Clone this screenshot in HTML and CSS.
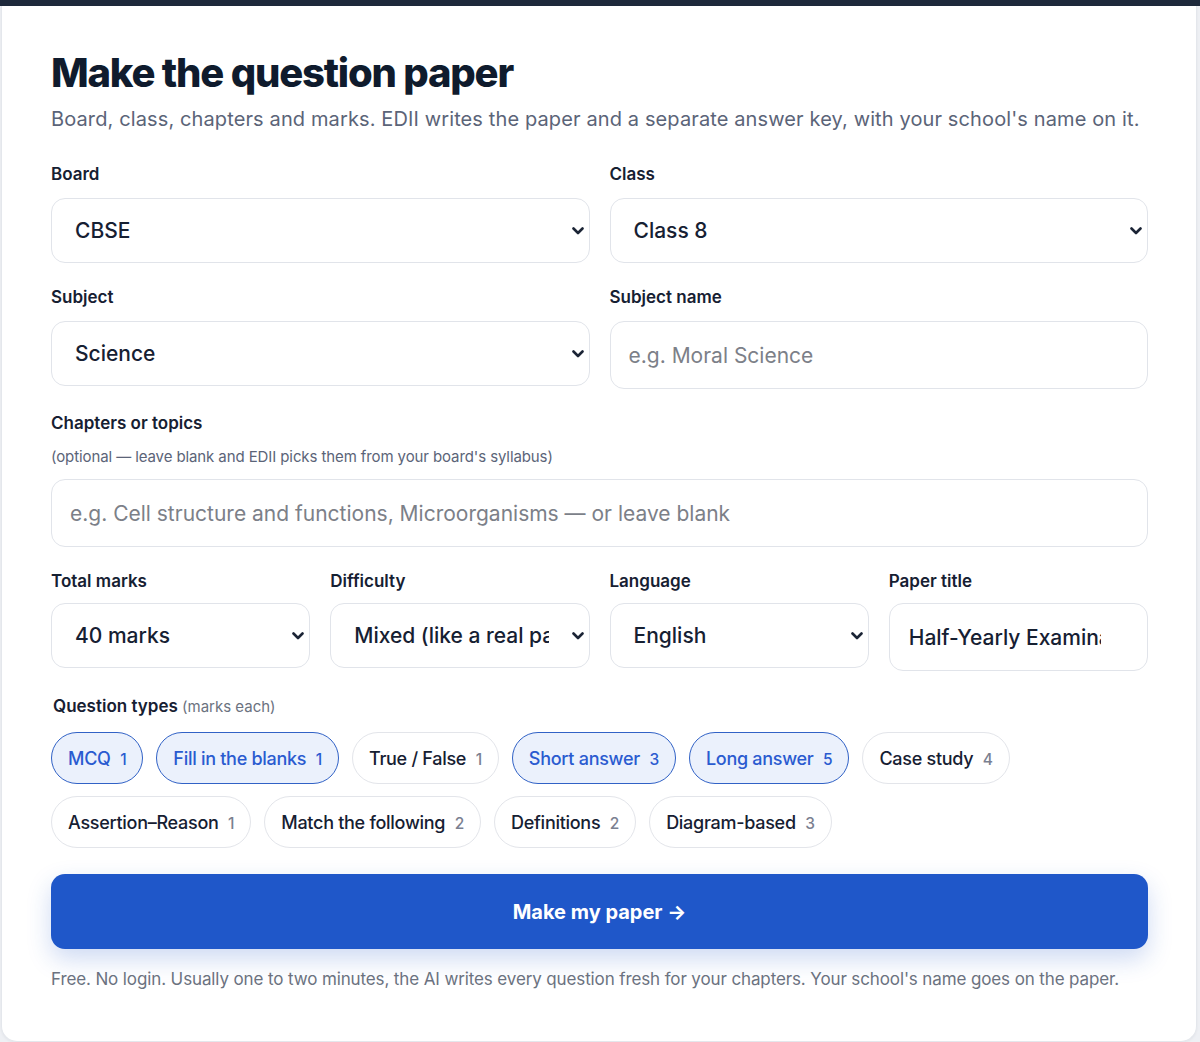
FILE: index.html
```html
<!DOCTYPE html>
<html lang="en">
<head>
    <meta charset="UTF-8">
    <meta name="viewport" content="width=device-width, initial-scale=1.0">
    <title>Make the question paper - EDII</title>
    <link rel="stylesheet" href="styles.css">
</head>
<body>
    <div class="topbar"></div>
    <form class="card" onsubmit="return false">
        <h1>Make the question paper</h1>
        <p class="subtitle">Board, class, chapters and marks. EDII writes the paper and a separate answer key, with your school's name on it.</p>

        <div class="grid two">
            <div class="field">
                <label>Board</label>
                <div class="select-wrap">
                    <select>
                        <option>CBSE</option>
                        <option>ICSE</option>
                        <option>State Board</option>
                    </select>
                    <svg class="chev" viewBox="0 0 12 8"><path d="M1.5 1.5 6 6l4.5-4.5"/></svg>
                </div>
            </div>
            <div class="field">
                <label>Class</label>
                <div class="select-wrap">
                    <select>
                        <option>Class 8</option>
                    </select>
                    <svg class="chev" viewBox="0 0 12 8"><path d="M1.5 1.5 6 6l4.5-4.5"/></svg>
                </div>
            </div>
            <div class="field">
                <label>Subject</label>
                <div class="select-wrap">
                    <select>
                        <option>Science</option>
                    </select>
                    <svg class="chev" viewBox="0 0 12 8"><path d="M1.5 1.5 6 6l4.5-4.5"/></svg>
                </div>
            </div>
            <div class="field">
                <label>Subject name</label>
                <input type="text" placeholder="e.g. Moral Science">
            </div>
            <div class="field wide">
                <label>Chapters or topics</label>
                <span class="hint">(optional — leave blank and EDII picks them from your board's syllabus)</span>
                <input type="text" class="pad-lg" placeholder="e.g. Cell structure and functions, Microorganisms — or leave blank">
            </div>
        </div>

        <div class="grid four">
            <div class="field">
                <label>Total marks</label>
                <div class="select-wrap">
                    <select>
                        <option>40 marks</option>
                    </select>
                    <svg class="chev" viewBox="0 0 12 8"><path d="M1.5 1.5 6 6l4.5-4.5"/></svg>
                </div>
            </div>
            <div class="field">
                <label>Difficulty</label>
                <div class="select-wrap">
                    <select>
                        <option>Mixed (like a real paper)</option>
                    </select>
                    <svg class="chev" viewBox="0 0 12 8"><path d="M1.5 1.5 6 6l4.5-4.5"/></svg>
                </div>
            </div>
            <div class="field">
                <label>Language</label>
                <div class="select-wrap">
                    <select>
                        <option>English</option>
                    </select>
                    <svg class="chev" viewBox="0 0 12 8"><path d="M1.5 1.5 6 6l4.5-4.5"/></svg>
                </div>
            </div>
            <div class="field">
                <label>Paper title</label>
                <input type="text" class="title-input" value="Half-Yearly Examination">
            </div>
        </div>

        <div class="types">
            <div class="types-label">Question types <small>(marks each)</small></div>
            <div class="chips">
                <button type="button" class="chip on">MCQ <span>1</span></button>
                <button type="button" class="chip on">Fill in the blanks <span>1</span></button>
                <button type="button" class="chip">True / False <span>1</span></button>
                <button type="button" class="chip on">Short answer <span>3</span></button>
                <button type="button" class="chip on">Long answer <span>5</span></button>
                <button type="button" class="chip">Case study <span>4</span></button>
                <button type="button" class="chip">Assertion–Reason <span>1</span></button>
                <button type="button" class="chip">Match the following <span>2</span></button>
                <button type="button" class="chip">Definitions <span>2</span></button>
                <button type="button" class="chip">Diagram-based <span>3</span></button>
            </div>
        </div>

        <button type="submit" class="make">Make my paper →</button>
        <p class="note">Free. No login. Usually one to two minutes, the AI writes every question fresh for your chapters. Your school's name goes on the paper.</p>
    </form>

    <script>
        // toggle question types on and off
        document.querySelectorAll('.chip').forEach(function (chip) {
            chip.addEventListener('click', function () {
                chip.classList.toggle('on');
            });
        });
    </script>
</body>
</html>
```

FILE: styles.css
```css
* {
    margin: 0;
    padding: 0;
    box-sizing: border-box;
}

body {
    font-family: Inter, 'Noto Sans', sans-serif;
    background: #eef0f4;
    color: #162032;
}

.topbar {
    height: 6px;
    background: #1e293b;
}

.card {
    width: 1196px;
    margin-left: 1px;
    background: #fff;
    border: 1px solid #e4e7ec;
    border-top: none;
    border-radius: 0 0 16px 16px;
    padding: 43px 48px 50px 49px;
    box-shadow: 0 1px 3px rgba(15, 23, 42, 0.05);
}

h1 {
    font-size: 40px;
    line-height: 48px;
    font-weight: 800;
    letter-spacing: -1.2px;
    color: #0f1b2d;
}

.subtitle {
    margin-top: 8px;
    font-size: 20px;
    line-height: 28px;
    letter-spacing: 0.12px;
    color: #5b6478;
}

.grid {
    display: grid;
    column-gap: 20px;
    row-gap: 22px;
}

.grid.two {
    margin-top: 29px;
    grid-template-columns: 1fr 1fr;
}

.grid.four {
    margin-top: 22px;
    grid-template-columns: repeat(4, 1fr);
    align-items: start;
}

.field {
    display: flex;
    flex-direction: column;
    gap: 12px;
}

.grid.four .field {
    gap: 10px;
}

.field.wide {
    grid-column: 1 / -1;
}

label,
.types-label {
    font-size: 17px;
    line-height: 24px;
    font-weight: 600;
    color: #162032;
}

.hint {
    font-size: 15px;
    line-height: 20px;
    letter-spacing: -0.1px;
    color: #5b6478;
}

.select-wrap {
    position: relative;
}

select {
    appearance: none;
    width: 100%;
    height: 65px;
    padding: 0 40px 0 23px;
    border: 1px solid #e1e4ea;
    border-radius: 14px;
    background: #fff;
    font-family: inherit;
    font-size: 21px;
    font-weight: 500;
    color: #162032;
}

.chev {
    position: absolute;
    right: 6px;
    top: 29px;
    width: 12px;
    height: 8px;
    pointer-events: none;
}

.chev path {
    fill: none;
    stroke: #1b2435;
    stroke-width: 2.6;
    stroke-linecap: round;
    stroke-linejoin: round;
}

input {
    width: 100%;
    height: 68px;
    padding: 0 18px;
    border: 1px solid #e1e4ea;
    border-radius: 14px;
    background: #fff;
    font-family: inherit;
    font-size: 21px;
    font-weight: 500;
    color: #162032;
}

input.pad-lg {
    padding-left: 18px;
}

input.title-input {
    padding: 0 46px 0 19px;
}

input::placeholder {
    color: #7c8088;
    font-weight: 400;
}

.types {
    margin-top: 23px;
}

.types-label {
    padding-left: 2px;
}

.types-label small {
    font-size: 15px;
    font-weight: 400;
    color: #6b7280;
}

.chips {
    margin-top: 13px;
    display: flex;
    flex-wrap: wrap;
    gap: 12px 13px;
}

.chip {
    height: 52px;
    padding: 0 16px;
    border: 1.5px solid #e3e5ea;
    border-radius: 26px;
    background: #fff;
    font-family: inherit;
    font-size: 18px;
    font-weight: 500;
    letter-spacing: -0.28px;
    color: #162032;
    cursor: pointer;
}

.chip span {
    margin-left: 5px;
    font-size: 15.5px;
    color: #7a8090;
}

.chip.on {
    background: #ebf1fc;
    border-color: #3162c6;
    color: #2a5bd0;
}

.chip.on span {
    color: #2a5bd0;
}

.make {
    display: block;
    width: 100%;
    height: 75px;
    margin-top: 26px;
    border: none;
    border-radius: 14px;
    background: #1f57c9;
    color: #fff;
    font-family: inherit;
    font-size: 20px;
    font-weight: 700;
    cursor: pointer;
    box-shadow: 0 10px 24px rgba(31, 87, 201, 0.22);
}

.make:hover {
    background: #1a4db3;
}

.note {
    margin-top: 18px;
    font-size: 17px;
    line-height: 24px;
    letter-spacing: -0.12px;
    color: #6b7280;
}
```
